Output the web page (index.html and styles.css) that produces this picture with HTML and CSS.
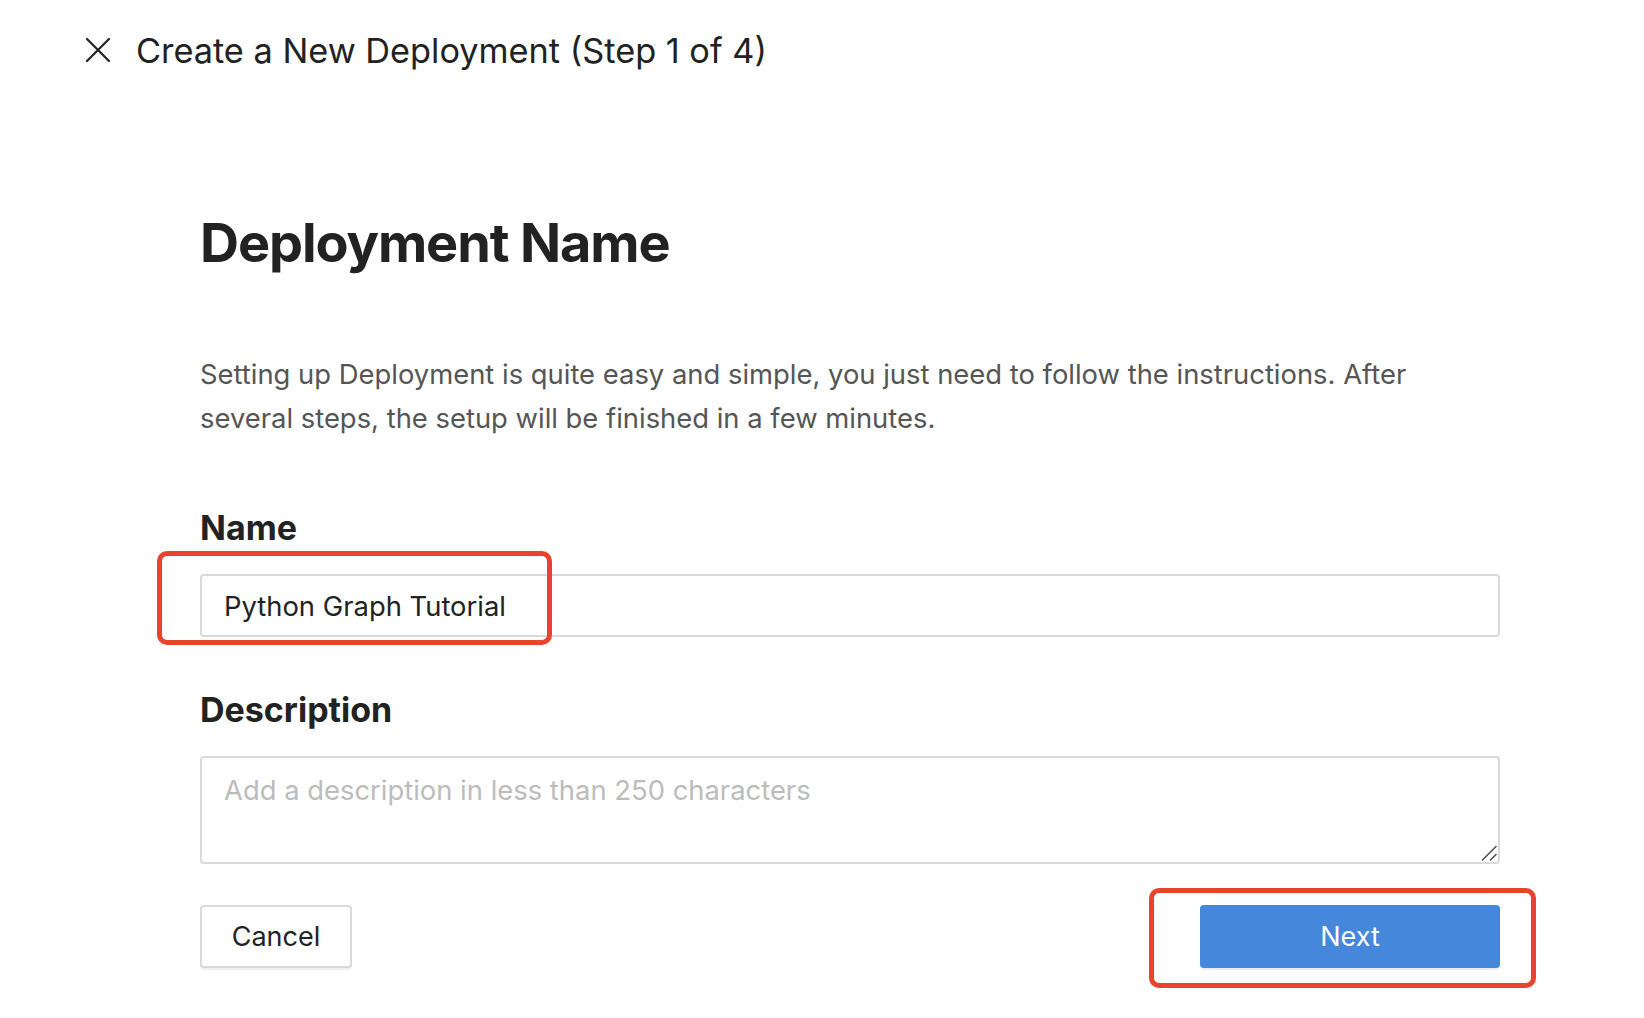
FILE: index.html
```html
<!DOCTYPE html>
<html lang="en">
<head>
<meta charset="utf-8">
<title>Create a New Deployment</title>
<link rel="stylesheet" href="styles.css">
</head>
<body>
<header class="topbar">
  <button class="close-btn" aria-label="Close">
    <svg width="28" height="28" viewBox="0 0 28 28" fill="none" stroke="#222" stroke-width="2.2" stroke-linecap="round"><path d="M3 3 L25 25 M25 3 L3 25"/></svg>
  </button>
  <h1 class="topbar-title">Create a New Deployment (Step 1 of 4)</h1>
</header>
<main class="content">
  <h2 class="page-title">Deployment Name</h2>
  <p class="intro">Setting up Deployment is quite easy and simple, you just need to follow the instructions. After several steps, the setup will be finished in a few minutes.</p>
  <div class="field">
    <label class="field-label" for="name">Name</label>
    <div class="input-wrap">
      <input id="name" class="text-input" type="text" value="Python Graph Tutorial">
      <span class="highlight highlight-name"></span>
    </div>
  </div>
  <div class="field">
    <label class="field-label" for="desc">Description</label>
    <div class="textarea-wrap">
      <textarea id="desc" class="text-area" placeholder="Add a description in less than 250 characters"></textarea>
      <svg class="resize-grip" width="16" height="16" viewBox="0 0 16 16" fill="none" stroke="#555" stroke-width="1.6" stroke-linecap="round"><path d="M1.5 15 L15 1.5 M9.5 15 L15 9.5"/></svg>
    </div>
  </div>
  <div class="actions">
    <button class="btn btn-secondary">Cancel</button>
    <div class="next-wrap">
      <button class="btn btn-primary">Next</button>
      <span class="highlight highlight-next"></span>
    </div>
  </div>
</main>
</body>
</html>
```
FILE: styles.css
```css
* { box-sizing: border-box; }
html, body { margin: 0; padding: 0; background: #fff; }
body {
  font-family: Inter, "Noto Sans", "Liberation Sans", sans-serif;
  color: #222;
  width: 1644px;
  height: 1018px;
  overflow: hidden;
}
.topbar {
  display: flex;
  align-items: center;
  gap: 24px;
  padding: 30px 0 0 84px;
  height: 70px;
}
.close-btn {
  border: 0;
  background: none;
  padding: 0;
  width: 28px;
  height: 28px;
  display: flex;
}
.topbar-title {
  margin: 0;
  font-size: 34.3px;
  font-weight: 400;
  color: #222;
}
.content {
  width: 1300px;
  margin-left: 200px;
  padding-top: 140px;
}
.page-title {
  margin: 0;
  font-size: 54px;
  font-weight: 700;
  line-height: 66px;
  letter-spacing: -1.1px;
  color: #222;
}
.intro {
  margin: 76px 0 0;
  font-size: 27.4px;
  line-height: 44px;
  color: #555;
  max-width: 1250px;
}
.field { margin-top: 68px; }
.field + .field { margin-top: 53px; }
.field-label {
  display: block;
  font-size: 34px;
  font-weight: 700;
  line-height: 40px;
  color: #222;
  margin-bottom: 26px;
}
.input-wrap, .textarea-wrap { position: relative; }
.text-input {
  display: block;
  width: 100%;
  height: 63px;
  border: 2px solid #dadada;
  border-radius: 4px;
  padding: 0 22px;
  font: inherit;
  font-size: 27.4px;
  color: #222;
  outline: none;
}
.text-area {
  display: block;
  width: 100%;
  height: 108px;
  border: 2px solid #dadada;
  border-radius: 4px;
  padding: 15px 22px;
  font: inherit;
  font-size: 27.4px;
  color: #222;
  resize: none;
  outline: none;
}
.text-area::placeholder { color: #bcbcbc; }
.resize-grip {
  position: absolute;
  right: 3px;
  bottom: 3px;
  pointer-events: none;
}
.actions {
  display: flex;
  justify-content: space-between;
  margin-top: 41px;
}
.btn {
  height: 63px;
  border-radius: 4px;
  font: inherit;
  font-size: 27px;
  cursor: pointer;
}
.btn-secondary {
  width: 152px;
  background: #fff;
  border: 2px solid #dadada;
  color: #222;
  box-shadow: 0 2px 0 #f0f0f0;
}
.btn-primary {
  width: 300px;
  background: #4487db;
  border: 0;
  color: #fff;
  box-shadow: 0 2px 0 #eeeeee;
}
.next-wrap { position: relative; }
.highlight {
  position: absolute;
  border: 5px solid #e8432d;
  border-radius: 10px;
  pointer-events: none;
}
.highlight-name { left: -43px; top: -23px; width: 395px; height: 94px; }
.highlight-next { left: -51px; top: -17px; width: 387px; height: 100px; }
```
